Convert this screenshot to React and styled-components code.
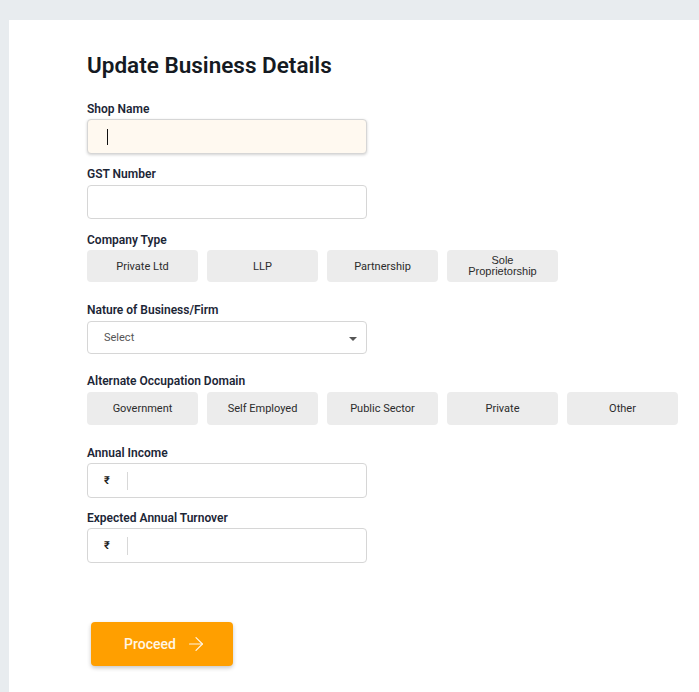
import React from "react";
import styled, { createGlobalStyle } from "styled-components";
import { ArrowRight } from "lucide-react";

const Global = createGlobalStyle`
  html, body { margin: 0; padding: 0; }
  body {
    background: #e8ecef;
    font-family: Roboto, "Liberation Sans", sans-serif;
    height: 692px;
    overflow: hidden;
  }
`;

const Card = styled.div`
  margin: 20px 0 0 9px;
  background: #ffffff;
  min-height: 672px;
  padding: 31px 0 0 78px;
  box-sizing: border-box;
`;

const Title = styled.h1`
  margin: 0;
  font-size: 22.5px;
  line-height: 28px;
  font-weight: 600;
  color: #151a22;
`;

const Field = styled.div`
  margin-top: ${(p) => p.$gap}px;
  display: flex;
  flex-direction: column;
`;

const Label = styled.div`
  font-size: 12px;
  line-height: 16px;
  font-weight: 600;
  color: #1c2636;
  margin-bottom: ${(p) => p.$mb ?? 3}px;
`;

const InputBox = styled.div`
  width: 280px;
  height: ${(p) => p.$h || 35}px;
  box-sizing: border-box;
  border: 1px solid #d6d6d6;
  border-radius: 4px;
  background: ${(p) => (p.$focused ? "#fff9f0" : "#ffffff")};
  box-shadow: ${(p) => (p.$focused ? "0 1px 3px rgba(0,0,0,0.18)" : "none")};
  display: flex;
  align-items: center;
`;

const Caret = styled.span`
  display: block;
  width: 1px;
  height: 16px;
  background: #111;
  margin-left: 19px;
`;

const SelectText = styled.span`
  flex: 1;
  padding-left: 16px;
  font-size: 11px;
  color: #555;
`;

const Triangle = styled.span`
  width: 0;
  height: 0;
  border-left: 4px solid transparent;
  border-right: 4px solid transparent;
  border-top: 4px solid #555;
  margin-right: 9px;
  margin-top: 2px;
`;

const Rupee = styled.span`
  width: 40px;
  box-sizing: border-box;
  padding-left: 16px;
  font-size: 11px;
  font-weight: 600;
  color: #222;
  border-right: 1px solid #d8d8d8;
  height: 18px;
  line-height: 18px;
`;

const Chips = styled.div`
  display: flex;
  gap: 9px;
`;

const Chip = styled.div`
  width: 111px;
  height: ${(p) => p.$h}px;
  background: #ececec;
  border-radius: 4px;
  display: flex;
  align-items: center;
  justify-content: center;
  text-align: center;
  font-size: 11px;
  line-height: 11px;
  color: #2b2b2b;
  font-family: ${(p) => (p.$alt ? '"Liberation Sans", Arial, sans-serif' : 'Roboto, sans-serif')};
`;

const Button = styled.button`
  margin: 59px 0 0 4px;
  width: 142px;
  height: 44px;
  border: none;
  border-radius: 4px;
  background: #ff9f00;
  box-shadow: 0 2px 4px rgba(0, 0, 0, 0.22);
  color: #fff6e6;
  font-family: Roboto, sans-serif;
  font-size: 14px;
  font-weight: 500;
  display: flex;
  align-items: center;
  justify-content: center;
  gap: 9px;
  padding: 0 0 0 7px;
  cursor: pointer;
`;

const companyTypes = ["Private Ltd", "LLP", "Partnership", "Sole\nProprietorship"];
const domains = ["Government", "Self Employed", "Public Sector", "Private", "Other"];

export default function App() {
  return (
    <>
      <Global />
      <Card>
        <Title>Update Business Details</Title>

        <Field $gap={22}>
          <Label $mb={2}>Shop Name</Label>
          <InputBox $focused>
            <Caret />
          </InputBox>
        </Field>

        <Field $gap={12}>
          <Label>GST Number</Label>
          <InputBox $h={34} />
        </Field>

        <Field $gap={13}>
          <Label $mb={2}>Company Type</Label>
          <Chips>
            {companyTypes.map((t) =>
              t.includes("\n") ? (
                <Chip key={t} $h={32} $alt>
                  Sole
                  <br />
                  Proprietorship
                </Chip>
              ) : (
                <Chip key={t} $h={32}>{t}</Chip>
              )
            )}
          </Chips>
        </Field>

        <Field $gap={20}>
          <Label>Nature of Business/Firm</Label>
          <InputBox $h={33}>
            <SelectText>Select</SelectText>
            <Triangle />
          </InputBox>
        </Field>

        <Field $gap={19}>
          <Label>Alternate Occupation Domain</Label>
          <Chips>
            {domains.map((t) => (
              <Chip key={t} $h={33}>{t}</Chip>
            ))}
          </Chips>
        </Field>

        <Field $gap={20}>
          <Label $mb={2}>Annual Income</Label>
          <InputBox>
            <Rupee>₹</Rupee>
          </InputBox>
        </Field>

        <Field $gap={12}>
          <Label $mb={2}>Expected Annual Turnover</Label>
          <InputBox>
            <Rupee>₹</Rupee>
          </InputBox>
        </Field>

        <Button>
          Proceed
          <ArrowRight size={22} strokeWidth={1.3} />
        </Button>
      </Card>
    </>
  );
}
